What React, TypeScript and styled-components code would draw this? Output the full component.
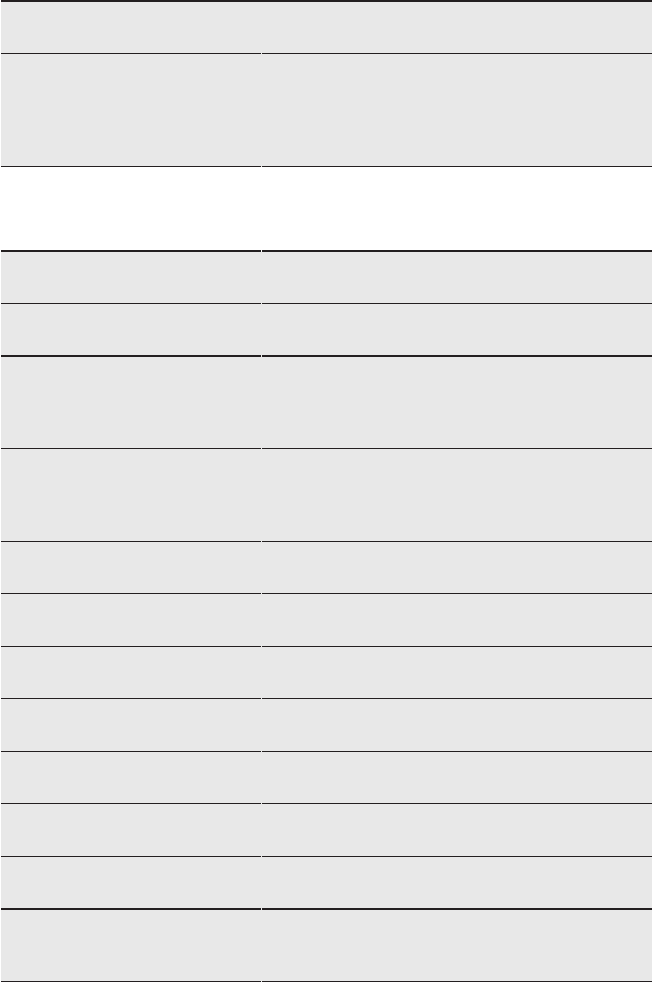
import React from "react";
import styled, { createGlobalStyle } from "styled-components";

const GlobalStyle = createGlobalStyle`
  html, body {
    margin: 0;
    padding: 0;
    background: #ffffff;
    font-family: "Liberation Sans", Arial, sans-serif;
  }
`;

const LINE = "#231f20";
const SHADE = "#e8e8e8";

interface RowSpec {
  height: number;
  shaded: boolean;
  heavy?: boolean;
}

// heights are the cell area above each rule, taken from the picture
const rows: RowSpec[] = [
  { height: 51, shaded: true },
  { height: 112, shaded: true },
  { height: 83, shaded: false, heavy: true },
  { height: 51, shaded: true },
  { height: 51, shaded: true, heavy: true },
  { height: 91, shaded: true },
  { height: 92, shaded: true },
  { height: 51, shaded: true },
  { height: 52, shaded: true },
  { height: 51, shaded: true },
  { height: 52, shaded: true },
  { height: 51, shaded: true },
  { height: 52, shaded: true },
  { height: 51, shaded: true, heavy: true },
  { height: 71, shaded: true },
];

const Page = styled.div`
  width: 653px;
  padding: 0 1px;
  box-sizing: border-box;
`;

const Table = styled.div`
  display: flex;
  flex-direction: column;
  border-top: 2px solid ${LINE};
`;

const Row = styled.div<{ $shaded: boolean }>`
  display: grid;
  grid-template-columns: 260px 1fr;
  column-gap: 1px;
  background: ${(p) => (p.$shaded ? SHADE : "#ffffff")};
`;

const Cell = styled.div<{ $h: number; $heavy?: boolean }>`
  height: ${(p) => p.$h}px;
  border-bottom: ${(p) => (p.$heavy ? 2 : 1)}px solid ${LINE};
  font-size: 14px;
  color: #231f20;
`;

export default function App() {
  return (
    <>
      <GlobalStyle />
      <Page>
        <Table>
          {rows.map((r, i) => (
            <Row key={i} $shaded={r.shaded}>
              <Cell $h={r.height} $heavy={r.heavy} />
              <Cell $h={r.height} $heavy={r.heavy} />
            </Row>
          ))}
        </Table>
      </Page>
    </>
  );
}
